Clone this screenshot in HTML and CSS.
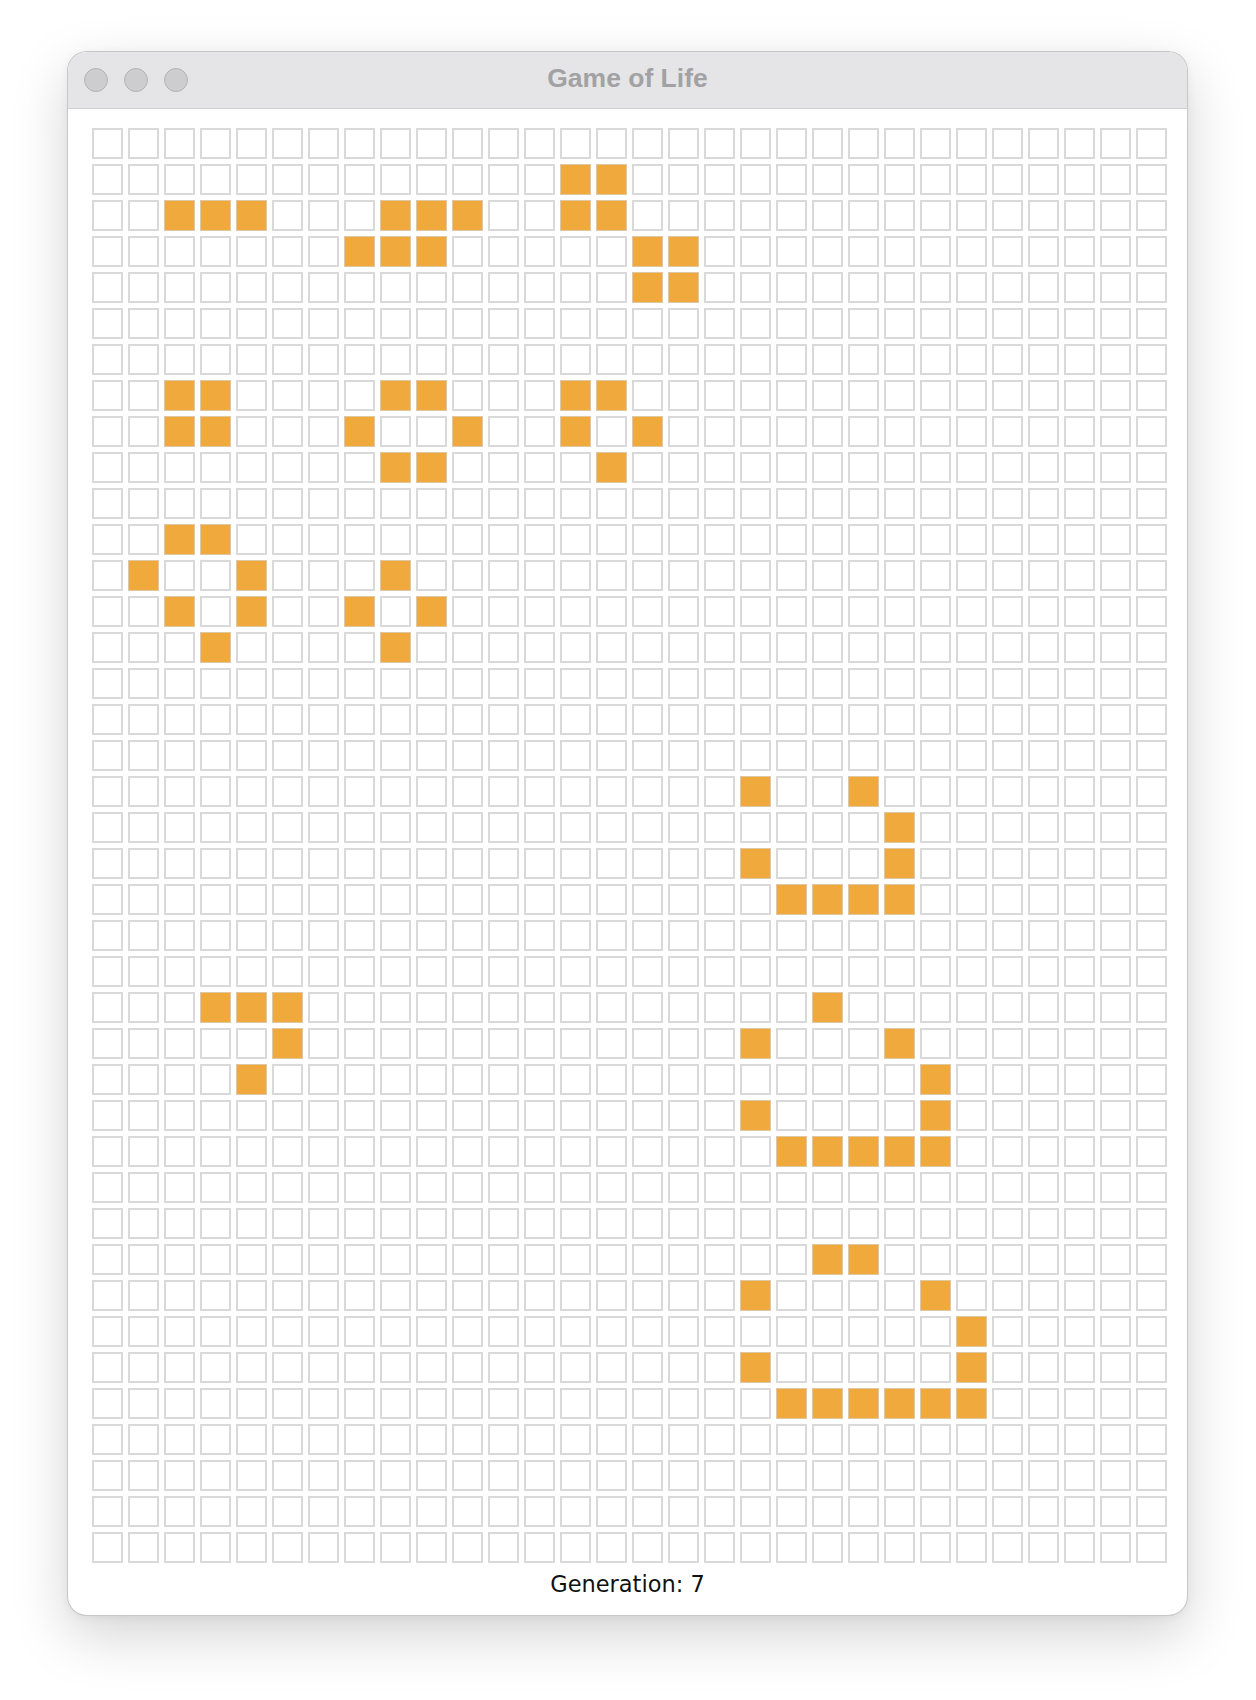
FILE: index.html
```html
<!DOCTYPE html>
<html lang="en">
<head>
<meta charset="utf-8">
<title>Game of Life</title>
<link rel="stylesheet" href="styles.css">
</head>
<body>
<div class="window">
  <div class="titlebar">
    <div class="lights"><span class="light"></span><span class="light"></span><span class="light"></span></div>
    <div class="title">Game of Life</div>
    <div class="spacer"></div>
  </div>
  <div class="board">
    <div class="grid">
<!-- r0 -->
<i></i><i></i><i></i><i></i><i></i> <i></i><i></i><i></i><i></i><i></i> <i></i><i></i><i></i><i></i><i></i> <i></i><i></i><i></i><i></i><i></i> <i></i><i></i><i></i><i></i><i></i> <i></i><i></i><i></i><i></i><i></i>
<!-- r1 -->
<i></i><i></i><i></i><i></i><i></i> <i></i><i></i><i></i><i></i><i></i> <i></i><i></i><i></i><i class="on"></i><i class="on"></i> <i></i><i></i><i></i><i></i><i></i> <i></i><i></i><i></i><i></i><i></i> <i></i><i></i><i></i><i></i><i></i>
<!-- r2 -->
<i></i><i></i><i class="on"></i><i class="on"></i><i class="on"></i> <i></i><i></i><i></i><i class="on"></i><i class="on"></i> <i class="on"></i><i></i><i></i><i class="on"></i><i class="on"></i> <i></i><i></i><i></i><i></i><i></i> <i></i><i></i><i></i><i></i><i></i> <i></i><i></i><i></i><i></i><i></i>
<!-- r3 -->
<i></i><i></i><i></i><i></i><i></i> <i></i><i></i><i class="on"></i><i class="on"></i><i class="on"></i> <i></i><i></i><i></i><i></i><i></i> <i class="on"></i><i class="on"></i><i></i><i></i><i></i> <i></i><i></i><i></i><i></i><i></i> <i></i><i></i><i></i><i></i><i></i>
<!-- r4 -->
<i></i><i></i><i></i><i></i><i></i> <i></i><i></i><i></i><i></i><i></i> <i></i><i></i><i></i><i></i><i></i> <i class="on"></i><i class="on"></i><i></i><i></i><i></i> <i></i><i></i><i></i><i></i><i></i> <i></i><i></i><i></i><i></i><i></i>
<!-- r5 -->
<i></i><i></i><i></i><i></i><i></i> <i></i><i></i><i></i><i></i><i></i> <i></i><i></i><i></i><i></i><i></i> <i></i><i></i><i></i><i></i><i></i> <i></i><i></i><i></i><i></i><i></i> <i></i><i></i><i></i><i></i><i></i>
<!-- r6 -->
<i></i><i></i><i></i><i></i><i></i> <i></i><i></i><i></i><i></i><i></i> <i></i><i></i><i></i><i></i><i></i> <i></i><i></i><i></i><i></i><i></i> <i></i><i></i><i></i><i></i><i></i> <i></i><i></i><i></i><i></i><i></i>
<!-- r7 -->
<i></i><i></i><i class="on"></i><i class="on"></i><i></i> <i></i><i></i><i></i><i class="on"></i><i class="on"></i> <i></i><i></i><i></i><i class="on"></i><i class="on"></i> <i></i><i></i><i></i><i></i><i></i> <i></i><i></i><i></i><i></i><i></i> <i></i><i></i><i></i><i></i><i></i>
<!-- r8 -->
<i></i><i></i><i class="on"></i><i class="on"></i><i></i> <i></i><i></i><i class="on"></i><i></i><i></i> <i class="on"></i><i></i><i></i><i class="on"></i><i></i> <i class="on"></i><i></i><i></i><i></i><i></i> <i></i><i></i><i></i><i></i><i></i> <i></i><i></i><i></i><i></i><i></i>
<!-- r9 -->
<i></i><i></i><i></i><i></i><i></i> <i></i><i></i><i></i><i class="on"></i><i class="on"></i> <i></i><i></i><i></i><i></i><i class="on"></i> <i></i><i></i><i></i><i></i><i></i> <i></i><i></i><i></i><i></i><i></i> <i></i><i></i><i></i><i></i><i></i>
<!-- r10 -->
<i></i><i></i><i></i><i></i><i></i> <i></i><i></i><i></i><i></i><i></i> <i></i><i></i><i></i><i></i><i></i> <i></i><i></i><i></i><i></i><i></i> <i></i><i></i><i></i><i></i><i></i> <i></i><i></i><i></i><i></i><i></i>
<!-- r11 -->
<i></i><i></i><i class="on"></i><i class="on"></i><i></i> <i></i><i></i><i></i><i></i><i></i> <i></i><i></i><i></i><i></i><i></i> <i></i><i></i><i></i><i></i><i></i> <i></i><i></i><i></i><i></i><i></i> <i></i><i></i><i></i><i></i><i></i>
<!-- r12 -->
<i></i><i class="on"></i><i></i><i></i><i class="on"></i> <i></i><i></i><i></i><i class="on"></i><i></i> <i></i><i></i><i></i><i></i><i></i> <i></i><i></i><i></i><i></i><i></i> <i></i><i></i><i></i><i></i><i></i> <i></i><i></i><i></i><i></i><i></i>
<!-- r13 -->
<i></i><i></i><i class="on"></i><i></i><i class="on"></i> <i></i><i></i><i class="on"></i><i></i><i class="on"></i> <i></i><i></i><i></i><i></i><i></i> <i></i><i></i><i></i><i></i><i></i> <i></i><i></i><i></i><i></i><i></i> <i></i><i></i><i></i><i></i><i></i>
<!-- r14 -->
<i></i><i></i><i></i><i class="on"></i><i></i> <i></i><i></i><i></i><i class="on"></i><i></i> <i></i><i></i><i></i><i></i><i></i> <i></i><i></i><i></i><i></i><i></i> <i></i><i></i><i></i><i></i><i></i> <i></i><i></i><i></i><i></i><i></i>
<!-- r15 -->
<i></i><i></i><i></i><i></i><i></i> <i></i><i></i><i></i><i></i><i></i> <i></i><i></i><i></i><i></i><i></i> <i></i><i></i><i></i><i></i><i></i> <i></i><i></i><i></i><i></i><i></i> <i></i><i></i><i></i><i></i><i></i>
<!-- r16 -->
<i></i><i></i><i></i><i></i><i></i> <i></i><i></i><i></i><i></i><i></i> <i></i><i></i><i></i><i></i><i></i> <i></i><i></i><i></i><i></i><i></i> <i></i><i></i><i></i><i></i><i></i> <i></i><i></i><i></i><i></i><i></i>
<!-- r17 -->
<i></i><i></i><i></i><i></i><i></i> <i></i><i></i><i></i><i></i><i></i> <i></i><i></i><i></i><i></i><i></i> <i></i><i></i><i></i><i></i><i></i> <i></i><i></i><i></i><i></i><i></i> <i></i><i></i><i></i><i></i><i></i>
<!-- r18 -->
<i></i><i></i><i></i><i></i><i></i> <i></i><i></i><i></i><i></i><i></i> <i></i><i></i><i></i><i></i><i></i> <i></i><i></i><i></i><i class="on"></i><i></i> <i></i><i class="on"></i><i></i><i></i><i></i> <i></i><i></i><i></i><i></i><i></i>
<!-- r19 -->
<i></i><i></i><i></i><i></i><i></i> <i></i><i></i><i></i><i></i><i></i> <i></i><i></i><i></i><i></i><i></i> <i></i><i></i><i></i><i></i><i></i> <i></i><i></i><i class="on"></i><i></i><i></i> <i></i><i></i><i></i><i></i><i></i>
<!-- r20 -->
<i></i><i></i><i></i><i></i><i></i> <i></i><i></i><i></i><i></i><i></i> <i></i><i></i><i></i><i></i><i></i> <i></i><i></i><i></i><i class="on"></i><i></i> <i></i><i></i><i class="on"></i><i></i><i></i> <i></i><i></i><i></i><i></i><i></i>
<!-- r21 -->
<i></i><i></i><i></i><i></i><i></i> <i></i><i></i><i></i><i></i><i></i> <i></i><i></i><i></i><i></i><i></i> <i></i><i></i><i></i><i></i><i class="on"></i> <i class="on"></i><i class="on"></i><i class="on"></i><i></i><i></i> <i></i><i></i><i></i><i></i><i></i>
<!-- r22 -->
<i></i><i></i><i></i><i></i><i></i> <i></i><i></i><i></i><i></i><i></i> <i></i><i></i><i></i><i></i><i></i> <i></i><i></i><i></i><i></i><i></i> <i></i><i></i><i></i><i></i><i></i> <i></i><i></i><i></i><i></i><i></i>
<!-- r23 -->
<i></i><i></i><i></i><i></i><i></i> <i></i><i></i><i></i><i></i><i></i> <i></i><i></i><i></i><i></i><i></i> <i></i><i></i><i></i><i></i><i></i> <i></i><i></i><i></i><i></i><i></i> <i></i><i></i><i></i><i></i><i></i>
<!-- r24 -->
<i></i><i></i><i></i><i class="on"></i><i class="on"></i> <i class="on"></i><i></i><i></i><i></i><i></i> <i></i><i></i><i></i><i></i><i></i> <i></i><i></i><i></i><i></i><i></i> <i class="on"></i><i></i><i></i><i></i><i></i> <i></i><i></i><i></i><i></i><i></i>
<!-- r25 -->
<i></i><i></i><i></i><i></i><i></i> <i class="on"></i><i></i><i></i><i></i><i></i> <i></i><i></i><i></i><i></i><i></i> <i></i><i></i><i></i><i class="on"></i><i></i> <i></i><i></i><i class="on"></i><i></i><i></i> <i></i><i></i><i></i><i></i><i></i>
<!-- r26 -->
<i></i><i></i><i></i><i></i><i class="on"></i> <i></i><i></i><i></i><i></i><i></i> <i></i><i></i><i></i><i></i><i></i> <i></i><i></i><i></i><i></i><i></i> <i></i><i></i><i></i><i class="on"></i><i></i> <i></i><i></i><i></i><i></i><i></i>
<!-- r27 -->
<i></i><i></i><i></i><i></i><i></i> <i></i><i></i><i></i><i></i><i></i> <i></i><i></i><i></i><i></i><i></i> <i></i><i></i><i></i><i class="on"></i><i></i> <i></i><i></i><i></i><i class="on"></i><i></i> <i></i><i></i><i></i><i></i><i></i>
<!-- r28 -->
<i></i><i></i><i></i><i></i><i></i> <i></i><i></i><i></i><i></i><i></i> <i></i><i></i><i></i><i></i><i></i> <i></i><i></i><i></i><i></i><i class="on"></i> <i class="on"></i><i class="on"></i><i class="on"></i><i class="on"></i><i></i> <i></i><i></i><i></i><i></i><i></i>
<!-- r29 -->
<i></i><i></i><i></i><i></i><i></i> <i></i><i></i><i></i><i></i><i></i> <i></i><i></i><i></i><i></i><i></i> <i></i><i></i><i></i><i></i><i></i> <i></i><i></i><i></i><i></i><i></i> <i></i><i></i><i></i><i></i><i></i>
<!-- r30 -->
<i></i><i></i><i></i><i></i><i></i> <i></i><i></i><i></i><i></i><i></i> <i></i><i></i><i></i><i></i><i></i> <i></i><i></i><i></i><i></i><i></i> <i></i><i></i><i></i><i></i><i></i> <i></i><i></i><i></i><i></i><i></i>
<!-- r31 -->
<i></i><i></i><i></i><i></i><i></i> <i></i><i></i><i></i><i></i><i></i> <i></i><i></i><i></i><i></i><i></i> <i></i><i></i><i></i><i></i><i></i> <i class="on"></i><i class="on"></i><i></i><i></i><i></i> <i></i><i></i><i></i><i></i><i></i>
<!-- r32 -->
<i></i><i></i><i></i><i></i><i></i> <i></i><i></i><i></i><i></i><i></i> <i></i><i></i><i></i><i></i><i></i> <i></i><i></i><i></i><i class="on"></i><i></i> <i></i><i></i><i></i><i class="on"></i><i></i> <i></i><i></i><i></i><i></i><i></i>
<!-- r33 -->
<i></i><i></i><i></i><i></i><i></i> <i></i><i></i><i></i><i></i><i></i> <i></i><i></i><i></i><i></i><i></i> <i></i><i></i><i></i><i></i><i></i> <i></i><i></i><i></i><i></i><i class="on"></i> <i></i><i></i><i></i><i></i><i></i>
<!-- r34 -->
<i></i><i></i><i></i><i></i><i></i> <i></i><i></i><i></i><i></i><i></i> <i></i><i></i><i></i><i></i><i></i> <i></i><i></i><i></i><i class="on"></i><i></i> <i></i><i></i><i></i><i></i><i class="on"></i> <i></i><i></i><i></i><i></i><i></i>
<!-- r35 -->
<i></i><i></i><i></i><i></i><i></i> <i></i><i></i><i></i><i></i><i></i> <i></i><i></i><i></i><i></i><i></i> <i></i><i></i><i></i><i></i><i class="on"></i> <i class="on"></i><i class="on"></i><i class="on"></i><i class="on"></i><i class="on"></i> <i></i><i></i><i></i><i></i><i></i>
<!-- r36 -->
<i></i><i></i><i></i><i></i><i></i> <i></i><i></i><i></i><i></i><i></i> <i></i><i></i><i></i><i></i><i></i> <i></i><i></i><i></i><i></i><i></i> <i></i><i></i><i></i><i></i><i></i> <i></i><i></i><i></i><i></i><i></i>
<!-- r37 -->
<i></i><i></i><i></i><i></i><i></i> <i></i><i></i><i></i><i></i><i></i> <i></i><i></i><i></i><i></i><i></i> <i></i><i></i><i></i><i></i><i></i> <i></i><i></i><i></i><i></i><i></i> <i></i><i></i><i></i><i></i><i></i>
<!-- r38 -->
<i></i><i></i><i></i><i></i><i></i> <i></i><i></i><i></i><i></i><i></i> <i></i><i></i><i></i><i></i><i></i> <i></i><i></i><i></i><i></i><i></i> <i></i><i></i><i></i><i></i><i></i> <i></i><i></i><i></i><i></i><i></i>
<!-- r39 -->
<i></i><i></i><i></i><i></i><i></i> <i></i><i></i><i></i><i></i><i></i> <i></i><i></i><i></i><i></i><i></i> <i></i><i></i><i></i><i></i><i></i> <i></i><i></i><i></i><i></i><i></i> <i></i><i></i><i></i><i></i><i></i>
    </div>
  </div>
  <div class="gen">Generation: 7</div>
</div>
</body>
</html>
```

FILE: styles.css
```css
html, body {
  margin: 0;
  padding: 0;
  background: #ffffff;
}

body {
  width: 1256px;
  height: 1700px;
  overflow: hidden;
}

.window {
  margin: 51px 0 0 67px;
  width: 1121px;
  height: 1565px;
  box-sizing: border-box;
  border: 1px solid rgba(0, 0, 0, 0.22);
  border-radius: 20px;
  background: #ffffff;
  box-shadow: 0 20px 55px rgba(0, 0, 0, 0.17), 0 2px 10px rgba(0, 0, 0, 0.05);
  overflow: hidden;
  display: flex;
  flex-direction: column;
}

.titlebar {
  flex: none;
  height: 56px;
  background: #e5e5e7;
  border-bottom: 1px solid #d2d2d4;
  display: grid;
  grid-template-columns: 1fr auto 1fr;
  align-items: center;
  padding: 0 16px;
}

.lights {
  display: flex;
  gap: 16px;
}

.light {
  width: 24px;
  height: 24px;
  box-sizing: border-box;
  border-radius: 50%;
  background: #cdcdcf;
  border: 1px solid #b3b3b5;
}

.title {
  font-family: "Liberation Sans", Arial, sans-serif;
  font-weight: bold;
  font-size: 26.5px;
  line-height: 30px;
  color: #a2a2a4;
  padding-bottom: 4px;
}

.board {
  flex: none;
  padding: 19px 0 0 24px;
}

.grid {
  display: grid;
  grid-template-columns: repeat(30, 31px);
  grid-auto-rows: 31px;
  gap: 5px;
}

.grid > i {
  display: block;
  box-sizing: border-box;
  border: 2px solid #d9d9d9;
  background: #ffffff;
}

.grid > i.on {
  background: #f0a93c;
  border: 1px solid #ddc7a4;
}

.gen {
  margin-top: 8px;
  text-align: center;
  font-family: "DejaVu Sans", Verdana, sans-serif;
  font-size: 22.5px;
  line-height: 26px;
  color: #111111;
}
```
